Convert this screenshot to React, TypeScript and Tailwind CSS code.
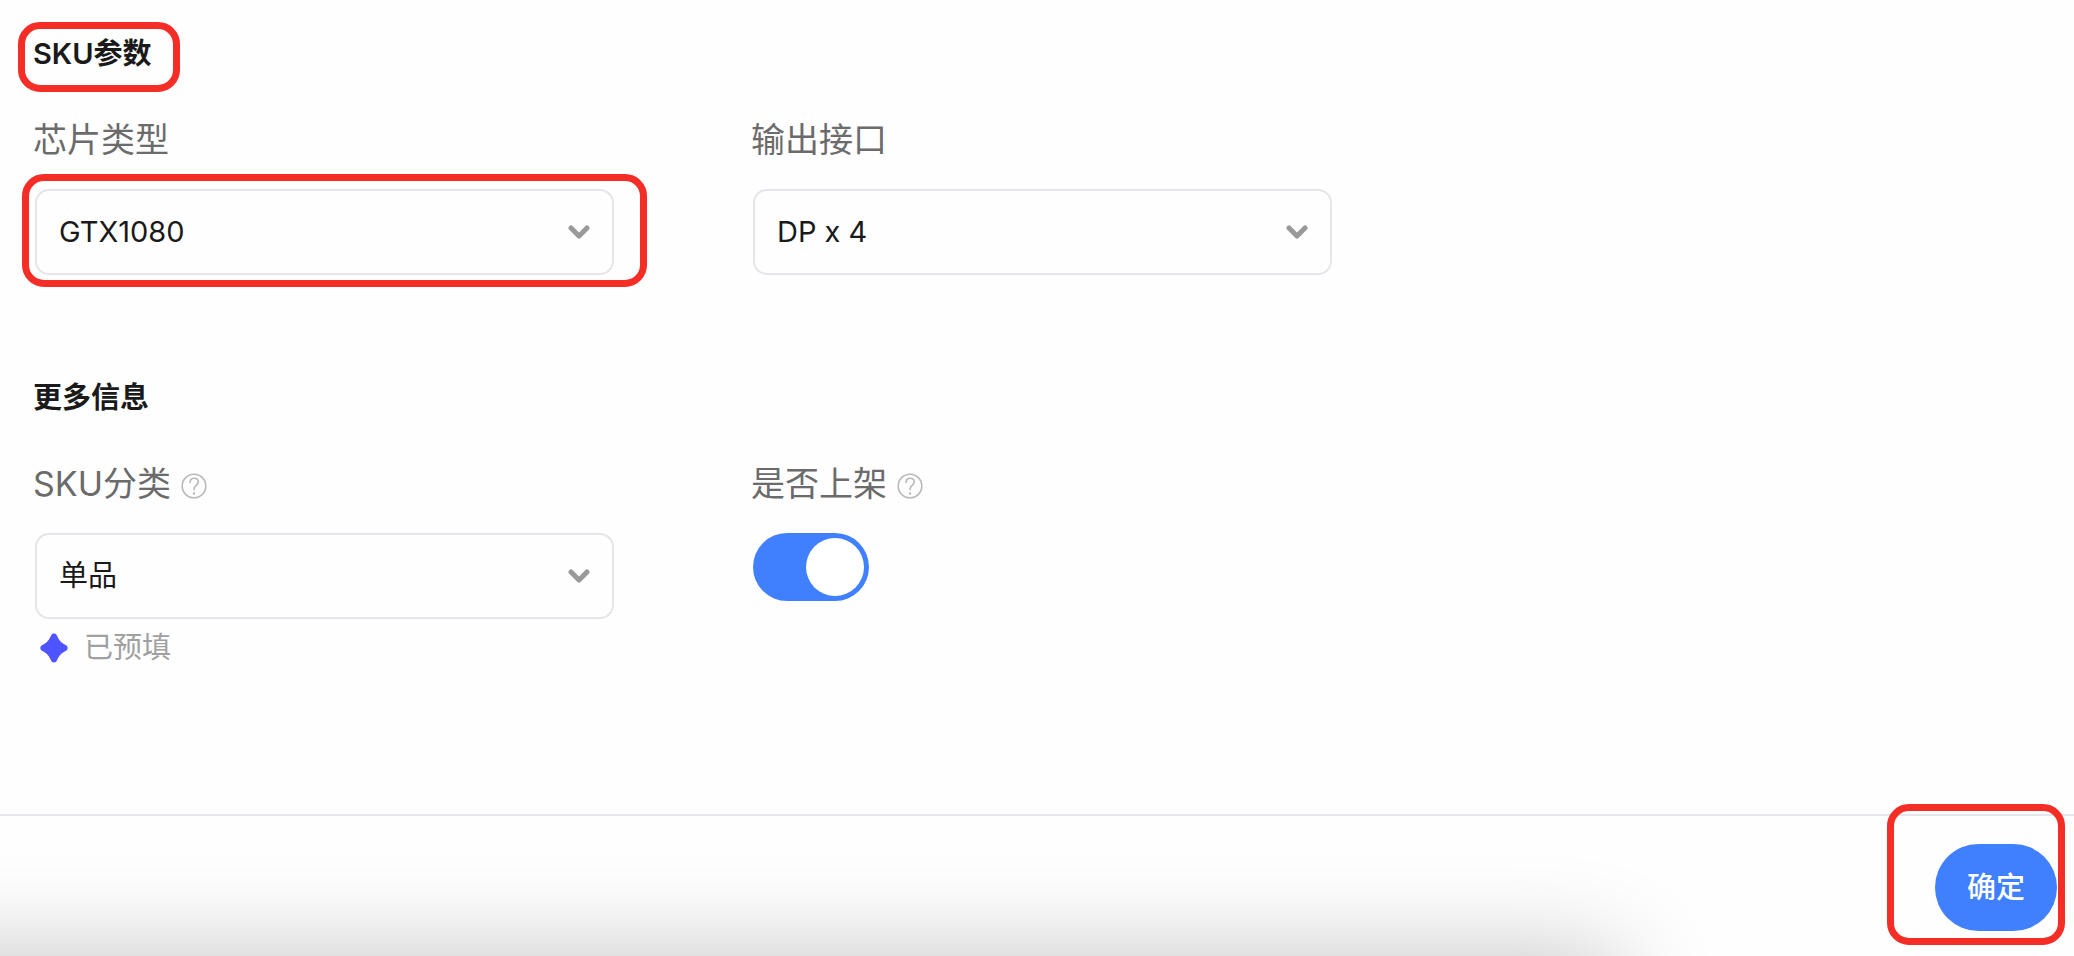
import { useState } from 'react'
import type { ReactNode } from 'react'

export default function App() {
  const [listed, setListed] = useState(true)

  return (
    <div className="min-h-screen flex flex-col bg-[#fefefe] text-[#1a1a1a] text-[29px] leading-10 font-[Inter,'Noto_Sans_CJK_SC',sans-serif]">
      <main className="flex-1 flex flex-col gap-[103px] pt-[34px] pb-[146px] pl-[33px] pr-[22px]">
        <section>
          <SectionTitle>
            SKU参数
            <Highlight className="-left-[15px] -right-7 -top-3 -bottom-[18px]" />
          </SectionTitle>
          <div className="grid grid-cols-3 gap-x-[135px]">
            <Field id="chip" label="芯片类型">
              <SelectBox id="chip" options={['GTX1080', 'GTX1070', 'GTX1060']}>
                <Highlight className="-left-[13px] -right-[33px] -top-[15px] -bottom-3" />
              </SelectBox>
            </Field>
            <Field id="output" label="输出接口">
              <SelectBox id="output" options={['DP x 4', 'DP x 3', 'HDMI x 1']} />
            </Field>
          </div>
        </section>

        <section>
          <SectionTitle>更多信息</SectionTitle>
          <div className="grid grid-cols-3 gap-x-[135px]">
            <Field id="category" label="SKU分类" help>
              <SelectBox id="category" options={['单品', '组合']} />
              <p className="mt-[9px] ml-[7px] flex items-center gap-4 text-[#a0a0a0]">
                <SparkIcon />
                已预填
              </p>
            </Field>
            <Field id="listed" label="是否上架" help>
              <button
                id="listed"
                type="button"
                role="switch"
                aria-checked={listed}
                onClick={() => setListed(!listed)}
                className={`mx-[2px] flex w-[116px] h-[68px] p-[5px] rounded-full ${
                  listed ? 'justify-end bg-[#4080ff]' : 'justify-start bg-[#c9cdd4]'
                }`}
              >
                <span className="w-[58px] h-[58px] rounded-full bg-white" />
              </button>
            </Field>
          </div>
        </section>
      </main>

      <footer className="relative flex justify-end border-t-2 border-[#e5e6eb] pt-7 pb-[25px] pr-[17px]">
        {/* Shadow rising from the bottom edge */}
        <div className="absolute inset-0 overflow-hidden pointer-events-none">
          <div className="absolute top-full -left-40 right-[22%] h-40 shadow-[0_0_100px_rgba(0,0,0,0.24)]" />
        </div>
        <div className="relative">
          <button type="button" className="block h-[87px] px-8 rounded-full bg-[#4080ff] text-white font-medium">
            确定
          </button>
          <Highlight className="-left-12 -right-2 -top-10 -bottom-[14px]" />
        </div>
      </footer>
    </div>
  )
}

function SectionTitle({ children }: { children: ReactNode }) {
  return <h2 className="relative w-fit mb-[42px] font-semibold">{children}</h2>
}

function Field({ id, label, help, children }: { id: string; label: string; help?: boolean; children: ReactNode }) {
  return (
    <div>
      <div className="flex items-center gap-2.5 mb-[25px]">
        <label htmlFor={id} className="text-[34px] leading-[48px] text-[#6b6b6b]">
          {label}
        </label>
        {help && <HelpIcon />}
      </div>
      {children}
    </div>
  )
}

function SelectBox({ id, options, children }: { id: string; options: string[]; children?: ReactNode }) {
  return (
    <div className="relative mx-[2px]">
      <select
        id={id}
        className="block w-full h-[86px] pl-[22px] pr-16 appearance-none rounded-[14px] border-2 border-[#e5e6eb] bg-transparent"
      >
        {options.map((option) => (
          <option key={option}>{option}</option>
        ))}
      </select>
      <svg
        className="absolute right-6 top-1/2 -translate-y-1/2 pointer-events-none"
        width="22"
        height="14"
        viewBox="0 0 22 14"
        fill="none"
        stroke="#999999"
        strokeWidth="5"
        strokeLinecap="round"
        strokeLinejoin="round"
      >
        <path d="M3 3l8 8 8-8" />
      </svg>
      {children}
    </div>
  )
}

function Highlight({ className }: { className: string }) {
  return <span className={`absolute rounded-[22px] border-[7px] border-[#f52d27] pointer-events-none ${className}`} />
}

function HelpIcon() {
  return (
    <svg
      className="mt-1"
      width="26"
      height="26"
      viewBox="0 0 26 26"
      fill="none"
      stroke="#b8b8b8"
      strokeWidth="1.6"
      strokeLinecap="round"
    >
      <circle cx="13" cy="13" r="11.8" />
      <path d="M9 9.400c0-2.600 1.700-4.200 4.100-4.200s4.100 1.500 4.100 3.800c0 3.200-4.100 3.600-4.100 6.900v.8" />
      <circle cx="13" cy="20.500" r="1.2" fill="#b8b8b8" stroke="none" />
    </svg>
  )
}

function SparkIcon() {
  return (
    <svg width="28" height="30" viewBox="0 0 28 30" fill="#4e54ff">
      <path d="M11.200 2.200c1.100-2.300 4.500-2.300 5.600 0 1.900 4.300 4 7.600 9.300 10 2.100 1.100 2.100 4.500 0 5.600-5.300 2.400-7.400 5.700-9.300 10-1.100 2.300-4.500 2.300-5.600 0-1.900-4.300-4-7.600-9.300-10-2.100-1.100-2.100-4.500 0-5.600 5.300-2.400 7.400-5.700 9.300-10z" />
    </svg>
  )
}
